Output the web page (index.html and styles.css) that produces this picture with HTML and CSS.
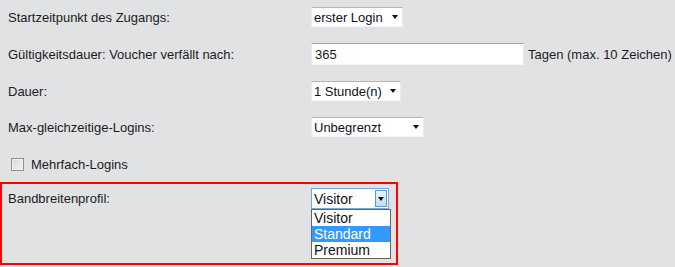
FILE: index.html
```html
<!DOCTYPE html>
<html lang="de">
<head>
<meta charset="utf-8">
<link rel="stylesheet" href="styles.css">
</head>
<body>
<form class="form">
  <div class="row">
    <label class="label">Startzeitpunkt des Zugangs:</label>
    <div class="select w-login"><span class="val">erster Login</span><span class="arrow"></span></div>
  </div>
  <div class="row row-input">
    <label class="label">Gültigkeitsdauer: Voucher verfällt nach:</label>
    <div class="input">365</div>
    <span class="hint">Tagen (max. 10 Zeichen)</span>
  </div>
  <div class="row">
    <label class="label">Dauer:</label>
    <div class="select w-dauer"><span class="val">1 Stunde(n)</span><span class="arrow"></span></div>
  </div>
  <div class="row">
    <label class="label">Max-gleichzeitige-Logins:</label>
    <div class="select w-max"><span class="val">Unbegrenzt</span><span class="arrow"></span></div>
  </div>
  <div class="row row-check">
    <span class="checkbox"></span>
    <span class="check-label">Mehrfach-Logins</span>
  </div>
  <div class="highlight">
    <label class="label label-top">Bandbreitenprofil:</label>
    <div class="open-select">
      <div class="select select-open"><span class="val">Visitor</span><span class="btn"><span class="arrow"></span></span></div>
      <ul class="list">
        <li class="opt">Visitor</li>
        <li class="opt opt-sel">Standard</li>
        <li class="opt">Premium</li>
      </ul>
    </div>
  </div>
</form>
</body>
</html>
```

FILE: styles.css
```css
html, body {
  margin: 0;
  padding: 0;
  background: #e1e2e4;
}
body {
  font-family: "Liberation Sans", Arial, sans-serif;
  font-size: 13px;
  color: #1c1c1c;
}
.form {
  padding-top: 7px;
  display: flex;
  flex-direction: column;
}
.row {
  display: flex;
  align-items: center;
  height: 20px;
  margin-bottom: 16px;
}
.row-input {
  height: 22px;
}
.label {
  width: 303px;
  padding-left: 8px;
  flex: none;
}
.select {
  box-sizing: border-box;
  height: 20px;
  background: #fff;
  border: 1px solid;
  border-color: #b4b4b4 #ececec #f6f6f6 #ececec;
  display: flex;
  align-items: center;
  justify-content: space-between;
  padding-left: 2px;
  padding-right: 4px;
  color: #101020;
}
.w-login { width: 92px; }
.w-dauer { width: 90px; }
.w-max { width: 113px; }
.arrow {
  width: 0;
  height: 0;
  border-left: 3.5px solid transparent;
  border-right: 3.5px solid transparent;
  border-top: 4px solid #111;
}
.input {
  box-sizing: border-box;
  width: 213px;
  height: 22px;
  background: #fff;
  border: 1px solid;
  border-color: #a8a8a8 #eaeaea #f6f6f6 #eaeaea;
  padding-left: 3px;
  display: flex;
  align-items: center;
}
.hint {
  margin-left: 4px;
}
.row-check {
  height: 22px;
  margin-bottom: 7px;
}
.checkbox {
  box-sizing: border-box;
  width: 13px;
  height: 13px;
  margin-left: 11px;
  margin-top: 1px;
  border: 1px solid #8e8f8f;
  background: linear-gradient(135deg, #d8d8d8 0%, #f4f4f4 100%);
  box-shadow: inset 0 0 0 1px #f1f1f1;
  flex: none;
}
.check-label {
  margin-left: 7px;
}
.highlight {
  box-sizing: border-box;
  width: 398px;
  height: 83px;
  border: 2px solid #ff0000;
  display: flex;
  align-items: flex-start;
  padding-top: 4px;
}
.label-top {
  padding-left: 6px;
  width: 303px;
  margin-top: 3px;
}
.open-select {
  display: flex;
  flex-direction: column;
  width: 80px;
}
.select-open {
  width: 78px;
  height: 21px;
  border: 1px solid #7aa7d8;
  padding-right: 1px;
  font-size: 14px;
}
.btn {
  box-sizing: border-box;
  width: 12px;
  height: 17px;
  border: 1px solid #5f98c9;
  background: linear-gradient(#e4f2fd, #bfdef7);
  display: flex;
  align-items: center;
  justify-content: center;
}
.list {
  list-style: none;
  margin: 0;
  padding: 0;
  box-sizing: border-box;
  width: 80px;
  background: #fff;
  border: 1px solid #646464;
  font-size: 14px;
  color: #101020;
}
.opt {
  height: 16px;
  line-height: 16px;
  padding-left: 2px;
}
.opt-sel {
  background: #3399ff;
  color: #fff;
}
```
